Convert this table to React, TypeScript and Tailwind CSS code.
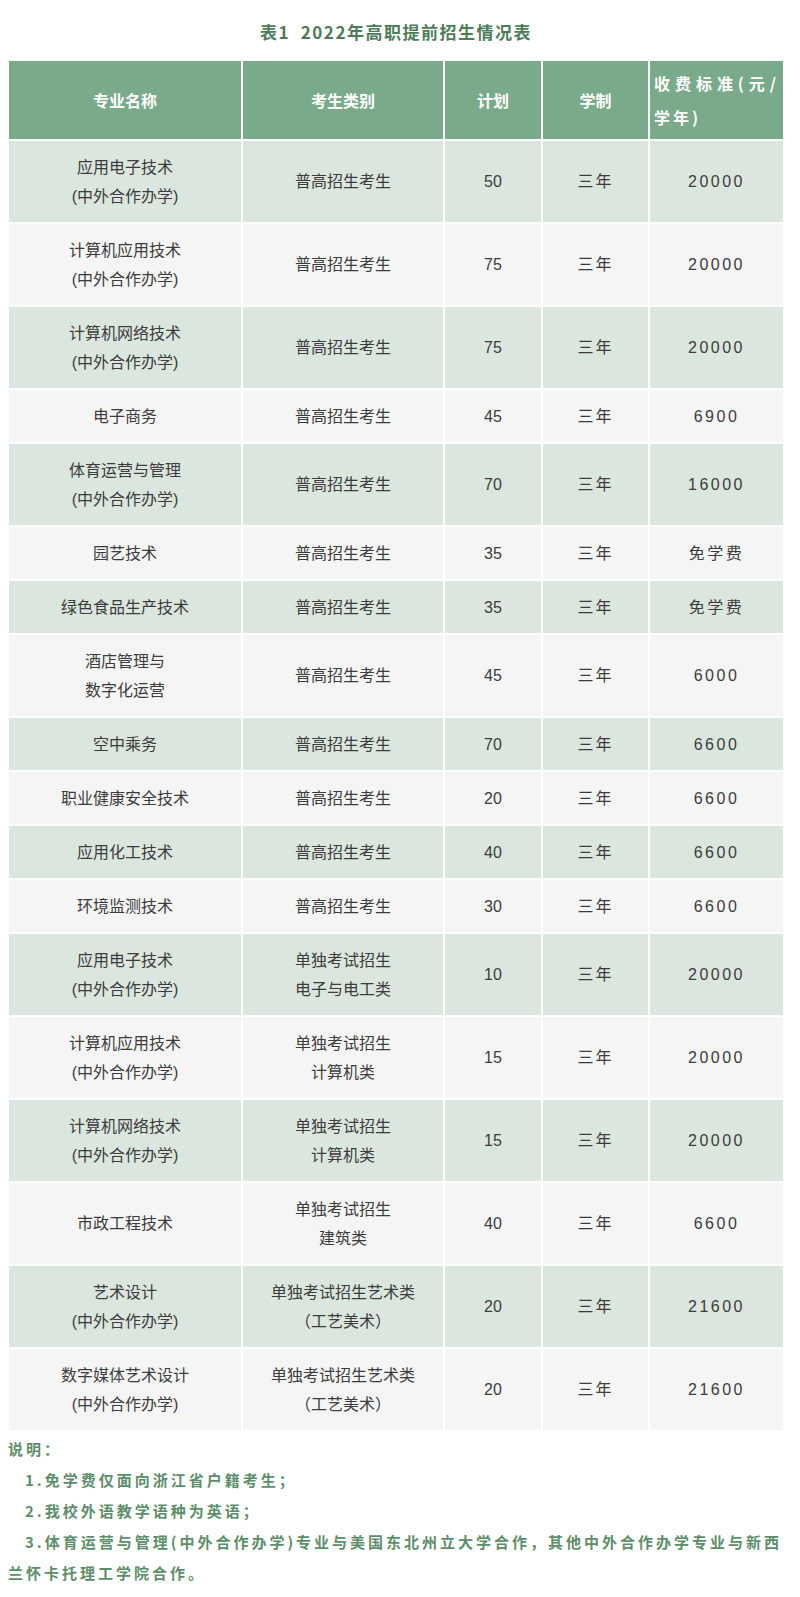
import React from "react";

type Row = { name: string[]; cat: string[]; plan: string; fee: string };

const HW = "(中外合作办学)";
const PG = ["普高招生考生"];

const rows: Row[] = [
  { name: ["应用电子技术", HW], cat: PG, plan: "50", fee: "20000" },
  { name: ["计算机应用技术", HW], cat: PG, plan: "75", fee: "20000" },
  { name: ["计算机网络技术", HW], cat: PG, plan: "75", fee: "20000" },
  { name: ["电子商务"], cat: PG, plan: "45", fee: "6900" },
  { name: ["体育运营与管理", HW], cat: PG, plan: "70", fee: "16000" },
  { name: ["园艺技术"], cat: PG, plan: "35", fee: "免学费" },
  { name: ["绿色食品生产技术"], cat: PG, plan: "35", fee: "免学费" },
  { name: ["酒店管理与", "数字化运营"], cat: PG, plan: "45", fee: "6000" },
  { name: ["空中乘务"], cat: PG, plan: "70", fee: "6600" },
  { name: ["职业健康安全技术"], cat: PG, plan: "20", fee: "6600" },
  { name: ["应用化工技术"], cat: PG, plan: "40", fee: "6600" },
  { name: ["环境监测技术"], cat: PG, plan: "30", fee: "6600" },
  { name: ["应用电子技术", HW], cat: ["单独考试招生", "电子与电工类"], plan: "10", fee: "20000" },
  { name: ["计算机应用技术", HW], cat: ["单独考试招生", "计算机类"], plan: "15", fee: "20000" },
  { name: ["计算机网络技术", HW], cat: ["单独考试招生", "计算机类"], plan: "15", fee: "20000" },
  { name: ["市政工程技术"], cat: ["单独考试招生", "建筑类"], plan: "40", fee: "6600" },
  { name: ["艺术设计", HW], cat: ["单独考试招生艺术类", "（工艺美术）"], plan: "20", fee: "21600" },
  { name: ["数字媒体艺术设计", HW], cat: ["单独考试招生艺术类", "（工艺美术）"], plan: "20", fee: "21600" },
];

const FONT = { fontFamily: '"Liberation Sans", "Noto Sans CJK SC", sans-serif' };
const CJK = { fontFamily: '"Noto Sans CJK SC", sans-serif' };

function Lines({ lines }: { lines: string[] }) {
  return (
    <div>
      {lines.map((l, i) => (
        <div key={i}>{l}</div>
      ))}
    </div>
  );
}

export default function App() {
  return (
    <div className="w-[800px] bg-white pt-[19px] pb-[12px]" style={FONT}>
      <div className="ml-[9px] w-[774px]">
        <div
          className="text-center text-[17px] font-bold leading-[26px] tracking-[1.5px] text-[#4d7c5b]"
          style={CJK}
        >
          表1&nbsp;&nbsp;2022年高职提前招生情况表
        </div>
        <div className="mt-[16px] grid grid-cols-[232px_200px_96px_105px_133px] gap-[2px] text-[16px] text-[#3c3c3c]">
          {["专业名称", "考生类别", "计划", "学制"].map((h) => (
            <div
              key={h}
              className="flex h-[78px] items-center justify-center bg-[#79aa8a] font-bold text-white"
              style={CJK}
            >
              {h}
            </div>
          ))}
          <div
            className="flex h-[78px] items-center bg-[#79aa8a] px-[4px] font-bold leading-[34px] tracking-[3px] text-white"
            style={CJK}
          >
            <div className="w-full text-justify">收费标准(元/学年)</div>
          </div>
          {rows.map((r, i) => {
            const bg = i % 2 === 0 ? "bg-[#dbe6de]" : "bg-[#f5f5f5]";
            const cell = `flex items-center justify-center text-center py-[11.5px] leading-[29px] ${bg}`;
            return (
              <React.Fragment key={i}>
                <div className={cell}>
                  <Lines lines={r.name} />
                </div>
                <div className={cell}>
                  <Lines lines={r.cat} />
                </div>
                <div className={cell}>{r.plan}</div>
                <div className={`${cell} tracking-[2px]`}>三年</div>
                <div className={`${cell} tracking-[2.5px]`}>{r.fee}</div>
              </React.Fragment>
            );
          })}
        </div>
        <div
          className="mt-[3px] -ml-[1px] text-[15px] font-bold leading-[31px] tracking-[3px] text-[#5d8e6a]"
          style={CJK}
        >
          <div>说明：</div>
          <div className="indent-[17px]">1.免学费仅面向浙江省户籍考生；</div>
          <div className="indent-[17px]">2.我校外语教学语种为英语；</div>
          <div className="indent-[17px]">
            3.体育运营与管理(中外合作办学)专业与美国东北州立大学合作，其他中外合作办学专业与新西兰怀卡托理工学院合作。
          </div>
        </div>
      </div>
    </div>
  );
}
